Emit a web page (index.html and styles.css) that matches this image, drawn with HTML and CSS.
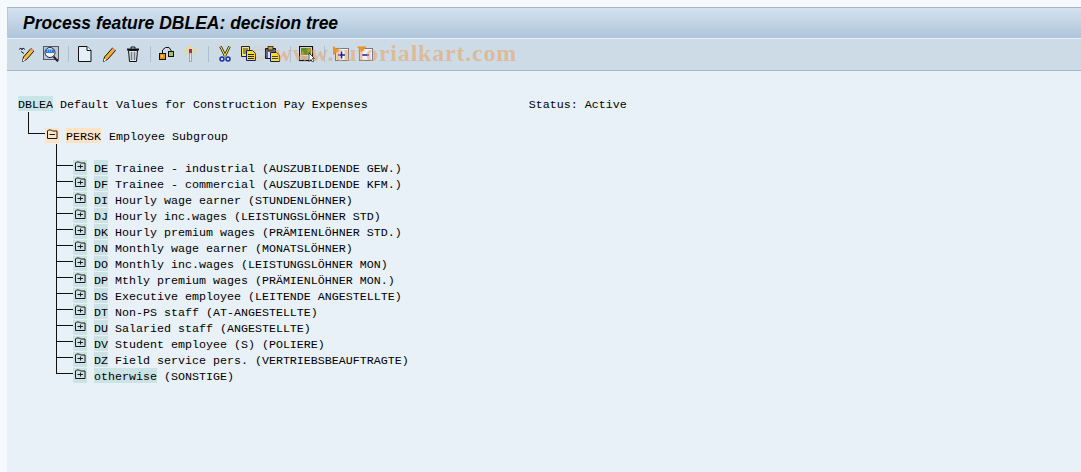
FILE: index.html
```html
<!DOCTYPE html>
<html lang="en">
<head>
  <meta charset="UTF-8" />
  <title>Process feature DBLEA: decision tree</title>
  <link rel="stylesheet" href="styles.css">
</head>
<body>
  <svg class="defs" aria-hidden="true">
    <symbol id="folder-closed" viewBox="0 0 14 15"><path d="M2.500 10.500v-7.500l1-1h3l1 1h4.500v7.500zM4.500 6.500h5.500M7.500 4.500v4" fill="none" stroke="#1a1a1a"/></symbol>
    <symbol id="folder-open" viewBox="0 0 14 15"><path d="M2.500 10.500v-7.500l1-1h3l1 1h4.500v7.500zM4.500 6.500h5.500" fill="none" stroke="#1a1a1a"/></symbol>
  </svg>

  <div class="window">
    <div class="title-bar"><h1>Process feature DBLEA: decision tree</h1></div>

    <div class="toolbar">
      <svg class="icon" viewBox="0 0 16 16"><path d="M0 3.500l2-1.500 1 2 1-2 2 1.500M2 5.500l3 2" fill="none" stroke="#222"/><path d="M3.500 15.500l1-4.500 7.500-8.500 3 2.500-7.500 8.500z" fill="#f6bc3c" stroke="#111"/><path d="M3.500 15.500l1-3 2 1.500z" fill="#fff"/><path d="M12 3l2.500 2" stroke="#e89088" stroke-width="2"/></svg>
      <svg class="icon" viewBox="0 0 16 16"><rect x=".5" y=".5" width="15" height="13" fill="#bcc8d4" stroke="#556"/><circle cx="7" cy="6.500" r="5" fill="#eef4fb" stroke="#223"/><path d="M3 3.500h8v3.500h-8z" fill="#2a78e8"/><path d="M4 5h1M6 5h1M8 5h1" stroke="#bcd8fa"/><path d="M10.500 10.500l4.500 5" stroke="#223" stroke-width="2"/></svg>
      <span class="sep"></span>
      <svg class="icon" viewBox="0 0 16 16"><path d="M1.500 .5h8.500l4 4v11h-12.500z" fill="#e4effa" stroke="#111"/><path d="M10 .5v4h4" fill="#fff" stroke="#111"/></svg>
      <svg class="icon" viewBox="0 0 16 16"><path d="M2.500 15.500l1-4.500 8-9 3 2.500-8 9z" fill="#f4ae2c" stroke="#111"/><path d="M2.500 15.500l1-3 2 1.500z" fill="#fff"/><path d="M11.500 2.500l2.500 2" stroke="#e89088" stroke-width="2"/></svg>
      <svg class="icon" viewBox="0 0 16 16"><path d="M2 3.500h12" stroke="#111" stroke-width="2"/><path d="M6 2.500v-1.500h4v1.500" fill="none" stroke="#111"/><path d="M3.500 4.500l1 11h7l1-11z" fill="#dfe4ea" stroke="#111"/><path d="M6.500 6v8M9.500 6v8" stroke="#707a88" stroke-width="1.500"/></svg>
      <span class="sep"></span>
      <svg class="icon" viewBox="0 0 16 16"><path d="M3.500 7v-3l3-2.500h3.500l2.500 3.500" fill="none" stroke="#111"/><rect x=".5" y="7.500" width="6" height="6" fill="#f09010" stroke="#111"/><rect x="2" y="9" width="2" height="2" fill="#fcd070"/><rect x="9.500" y="5.500" width="5" height="5" fill="#a8c060" stroke="#111"/></svg>
      <svg class="icon" viewBox="0 0 16 16"><path d="M2 1l3 3M13 1l-3 3M1 5h3M11 5h3M2 9l3-2M13 9l-3-2M7.500 0v2" stroke="#f4e030"/><rect x="6" y="3" width="3" height="4" fill="#e01818"/><rect x="6.500" y="7" width="2" height="8.500" fill="#e8e8e8" stroke="#778" stroke-width=".6"/></svg>
      <span class="sep"></span>
      <svg class="icon" viewBox="0 0 16 16"><path d="M3.500 .5l5 10M12.500 .5l-5 10" stroke="#111" stroke-width="2.600"/><path d="M3.500 .5l5 10M12.500 .5l-5 10" stroke="#f4e030" stroke-width="1.200"/><circle cx="5" cy="13" r="2" fill="none" stroke="#1a2ca8" stroke-width="1.500"/><circle cx="11" cy="13" r="2" fill="none" stroke="#1a2ca8" stroke-width="1.500"/></svg>
      <svg class="icon" viewBox="0 0 16 16"><path d="M.5 .5h8v10h-8z" fill="#f8e858" stroke="#141c70"/><path d="M2 3h5M2 5h3M2 7h3" stroke="#333"/><path d="M5.500 4.500h6l3 3v7h-9z" fill="#f8e020" stroke="#141c70"/><path d="M7 8.500h6M7 10.500h6M7 12.500h6" stroke="#223"/></svg>
      <svg class="icon" viewBox="0 0 16 16"><path d="M.5 2.500h10v10h-10z" fill="#5e6880" stroke="#111"/><rect x="3" y=".5" width="5" height="3.500" fill="#d8a020" stroke="#111" stroke-width=".7"/><rect x="3" y="6" width="4" height="6" fill="#dde2ea"/><path d="M5.500 6.500h6l3 2.500v6.500h-9z" fill="#f8e020" stroke="#141c70"/><path d="M7 10.500h6M7 12.500h6" stroke="#445"/></svg>
      <span class="sep"></span>
      <svg class="icon" viewBox="0 0 16 16"><rect x=".5" y=".5" width="13" height="14" fill="#e8e8e0" stroke="#111" stroke-width="1.200"/><rect x="2" y="2" width="10" height="7" fill="#5f8f28"/><path d="M7 2h5v5z" fill="#a89030"/><path d="M2 11h7M2 13h7" stroke="#8a94a0"/><path d="M10 7v8.500l2-2 1.500 2.500 1.500-1-1.500-2.500h2z" fill="#fff" stroke="#111" stroke-width=".7"/></svg>
      <span class="sep"></span>
      <svg class="icon" viewBox="0 0 16 16"><rect x="2.500" y="2.500" width="13" height="12" fill="#eef2fa" stroke="#7a7a80"/><path d="M0 0l6.500 4.500-6.500 4.500z" fill="#f09018"/><path d="M5 9h7M8.500 5.500v7" stroke="#141ca8" stroke-width="1.500"/></svg>
      <svg class="icon" viewBox="0 0 16 16"><rect x="2.500" y="2.500" width="13" height="12" fill="#eef2fa" stroke="#7a7a80"/><path d="M0 .5h9.500l-5 6z" fill="#f09018"/><path d="M5 9h7" stroke="#141ca8" stroke-width="1.500"/></svg>
      <span class="watermark"><span class="watermark-c">©</span>www.tutorialkart.com</span>
    </div>

    <div class="tree">
      <div class="row root">
        <span class="key teal">DBLEA</span><span class="txt">Default Values for Construction Pay Expenses</span><span class="status">Status: Active</span>
      </div>
      <div class="link-root"></div>
      <div class="row level1">
        <span class="branch-root"></span>
        <span class="node orange"><svg><use href="#folder-open"/></svg></span>
        <span class="key orange">PERSK</span><span class="txt">Employee Subgroup</span>
      </div>

      <div class="gap"></div>
      <div class="row leaf"><span class="branch"></span><span class="node teal"><svg><use href="#folder-closed"/></svg></span><span class="key teal">DE</span><span class="txt">Trainee - industrial (AUSZUBILDENDE GEW.)</span></div>
      <div class="row leaf"><span class="branch"></span><span class="node teal"><svg><use href="#folder-closed"/></svg></span><span class="key teal">DF</span><span class="txt">Trainee - commercial (AUSZUBILDENDE KFM.)</span></div>
      <div class="row leaf"><span class="branch"></span><span class="node teal"><svg><use href="#folder-closed"/></svg></span><span class="key teal">DI</span><span class="txt">Hourly wage earner (STUNDENLÖHNER)</span></div>
      <div class="row leaf"><span class="branch"></span><span class="node teal"><svg><use href="#folder-closed"/></svg></span><span class="key teal">DJ</span><span class="txt">Hourly inc.wages (LEISTUNGSLÖHNER STD)</span></div>
      <div class="row leaf"><span class="branch"></span><span class="node teal"><svg><use href="#folder-closed"/></svg></span><span class="key teal">DK</span><span class="txt">Hourly premium wages (PRÄMIENLÖHNER STD.)</span></div>
      <div class="row leaf"><span class="branch"></span><span class="node teal"><svg><use href="#folder-closed"/></svg></span><span class="key teal">DN</span><span class="txt">Monthly wage earner (MONATSLÖHNER)</span></div>
      <div class="row leaf"><span class="branch"></span><span class="node teal"><svg><use href="#folder-closed"/></svg></span><span class="key teal">DO</span><span class="txt">Monthly inc.wages (LEISTUNGSLÖHNER MON)</span></div>
      <div class="row leaf"><span class="branch"></span><span class="node teal"><svg><use href="#folder-closed"/></svg></span><span class="key teal">DP</span><span class="txt">Mthly premium wages (PRÄMIENLÖHNER MON.)</span></div>
      <div class="row leaf"><span class="branch"></span><span class="node teal"><svg><use href="#folder-closed"/></svg></span><span class="key teal">DS</span><span class="txt">Executive employee (LEITENDE ANGESTELLTE)</span></div>
      <div class="row leaf"><span class="branch"></span><span class="node teal"><svg><use href="#folder-closed"/></svg></span><span class="key teal">DT</span><span class="txt">Non-PS staff (AT-ANGESTELLTE)</span></div>
      <div class="row leaf"><span class="branch"></span><span class="node teal"><svg><use href="#folder-closed"/></svg></span><span class="key teal">DU</span><span class="txt">Salaried staff (ANGESTELLTE)</span></div>
      <div class="row leaf"><span class="branch"></span><span class="node teal"><svg><use href="#folder-closed"/></svg></span><span class="key teal">DV</span><span class="txt">Student employee (S) (POLIERE)</span></div>
      <div class="row leaf"><span class="branch"></span><span class="node teal"><svg><use href="#folder-closed"/></svg></span><span class="key teal">DZ</span><span class="txt">Field service pers. (VERTRIEBSBEAUFTRAGTE)</span></div>
      <div class="row leaf last"><span class="branch"></span><span class="node teal"><svg><use href="#folder-closed"/></svg></span><span class="key teal wide">otherwise</span><span class="txt">(SONSTIGE)</span></div>
    </div>
  </div>
</body>
</html>
```

FILE: styles.css
```css
html, body {
  height: 100%;
}

body {
  margin: 0;
  padding: 7px 0 0 7px;
  box-sizing: border-box;
  overflow: hidden;
  background: #f5f8fc;
  font-family: "Liberation Mono", "Courier New", monospace;
  font-size: 11.67px;
  color: #000;
}

.defs {
  display: none;
}

.window {
  height: 100%;
  display: flex;
  flex-direction: column;
  background: #e8f0f8;
  border-top: 1px solid #a9b5c6;
}

/* title */
.title-bar {
  height: 30px;
  flex-shrink: 0;
  display: flex;
  align-items: center;
  padding-left: 15px;
  border-left: 1px solid #b8c8da;
  box-sizing: border-box;
  background: linear-gradient(#d5e2ef, #adc5da);
}

.title-bar h1 {
  margin: 0;
  font-family: "Liberation Sans", Arial, sans-serif;
  font-size: 17.5px;
  font-style: italic;
  font-weight: bold;
  color: #000;
}

/* toolbar */
.toolbar {
  position: relative;
  height: 33px;
  flex-shrink: 0;
  box-sizing: border-box;
  display: flex;
  align-items: center;
  gap: 8px;
  padding: 0 0 2px 12px;
  background: #cddbe7;
  border-top: 1px solid #e8f0f8;
  border-bottom: 1px solid #a9b5c4;
}

.icon {
  width: 16px;
  height: 16px;
  flex-shrink: 0;
}

.sep {
  width: 1px;
  height: 16px;
  margin-left: 1px;
  background: #aebfd2;
}

.watermark {
  position: absolute;
  left: 243px;
  top: 1px;
  font-family: "Liberation Serif", serif;
  font-size: 24px;
  font-weight: bold;
  letter-spacing: .8px;
  color: rgba(232, 160, 90, .55);
  white-space: nowrap;
}

.watermark-c {
  margin-right: 7px;
  font-size: 22px;
  font-weight: normal;
  color: rgba(232, 160, 90, .3);
}

/* tree */
.tree {
  padding: 25px 0 0 11px;
}

.row {
  display: flex;
  height: 16px;
  line-height: 18px;
  white-space: pre;
}

.key,
.node {
  height: 15px;
  flex-shrink: 0;
}

.key {
  width: 14px;
  overflow: hidden;
}

.root .key,
.level1 .key {
  width: 35px;
}

.key.wide {
  width: 63px;
}

.teal {
  background: #c8e6e8;
}

.leaf .teal {
  background: #cce3e5;
}

.orange {
  background: #fde3c6;
}

.node {
  width: 14px;
  margin-right: 7px;
}

.node svg {
  display: block;
  width: 14px;
  height: 15px;
}

.txt {
  margin-left: 7px;
}

.level1 .txt {
  margin-left: 8px;
}

.status {
  margin-left: 28px;
  padding-left: 133px;
}

/* tree lines */
.link-root {
  height: 16px;
  margin-left: 10px;
  border-left: 1px solid #111;
}

.branch-root {
  width: 17px;
  height: 16px;
  margin-left: 10px;
  flex-shrink: 0;
  background:
    linear-gradient(#111, #111) 0 0 / 1px 6px no-repeat,
    linear-gradient(#111, #111) 0 5px / 17px 1px no-repeat;
}

.gap {
  height: 16px;
  margin-left: 38px;
  border-left: 1px solid #111;
}

.branch {
  width: 17px;
  height: 16px;
  margin-left: 38px;
  flex-shrink: 0;
  background:
    linear-gradient(#111, #111) 0 0 / 1px 16px no-repeat,
    linear-gradient(#111, #111) 0 5px / 17px 1px no-repeat;
}

.last .branch {
  background:
    linear-gradient(#111, #111) 0 0 / 1px 6px no-repeat,
    linear-gradient(#111, #111) 0 5px / 17px 1px no-repeat;
}
```
